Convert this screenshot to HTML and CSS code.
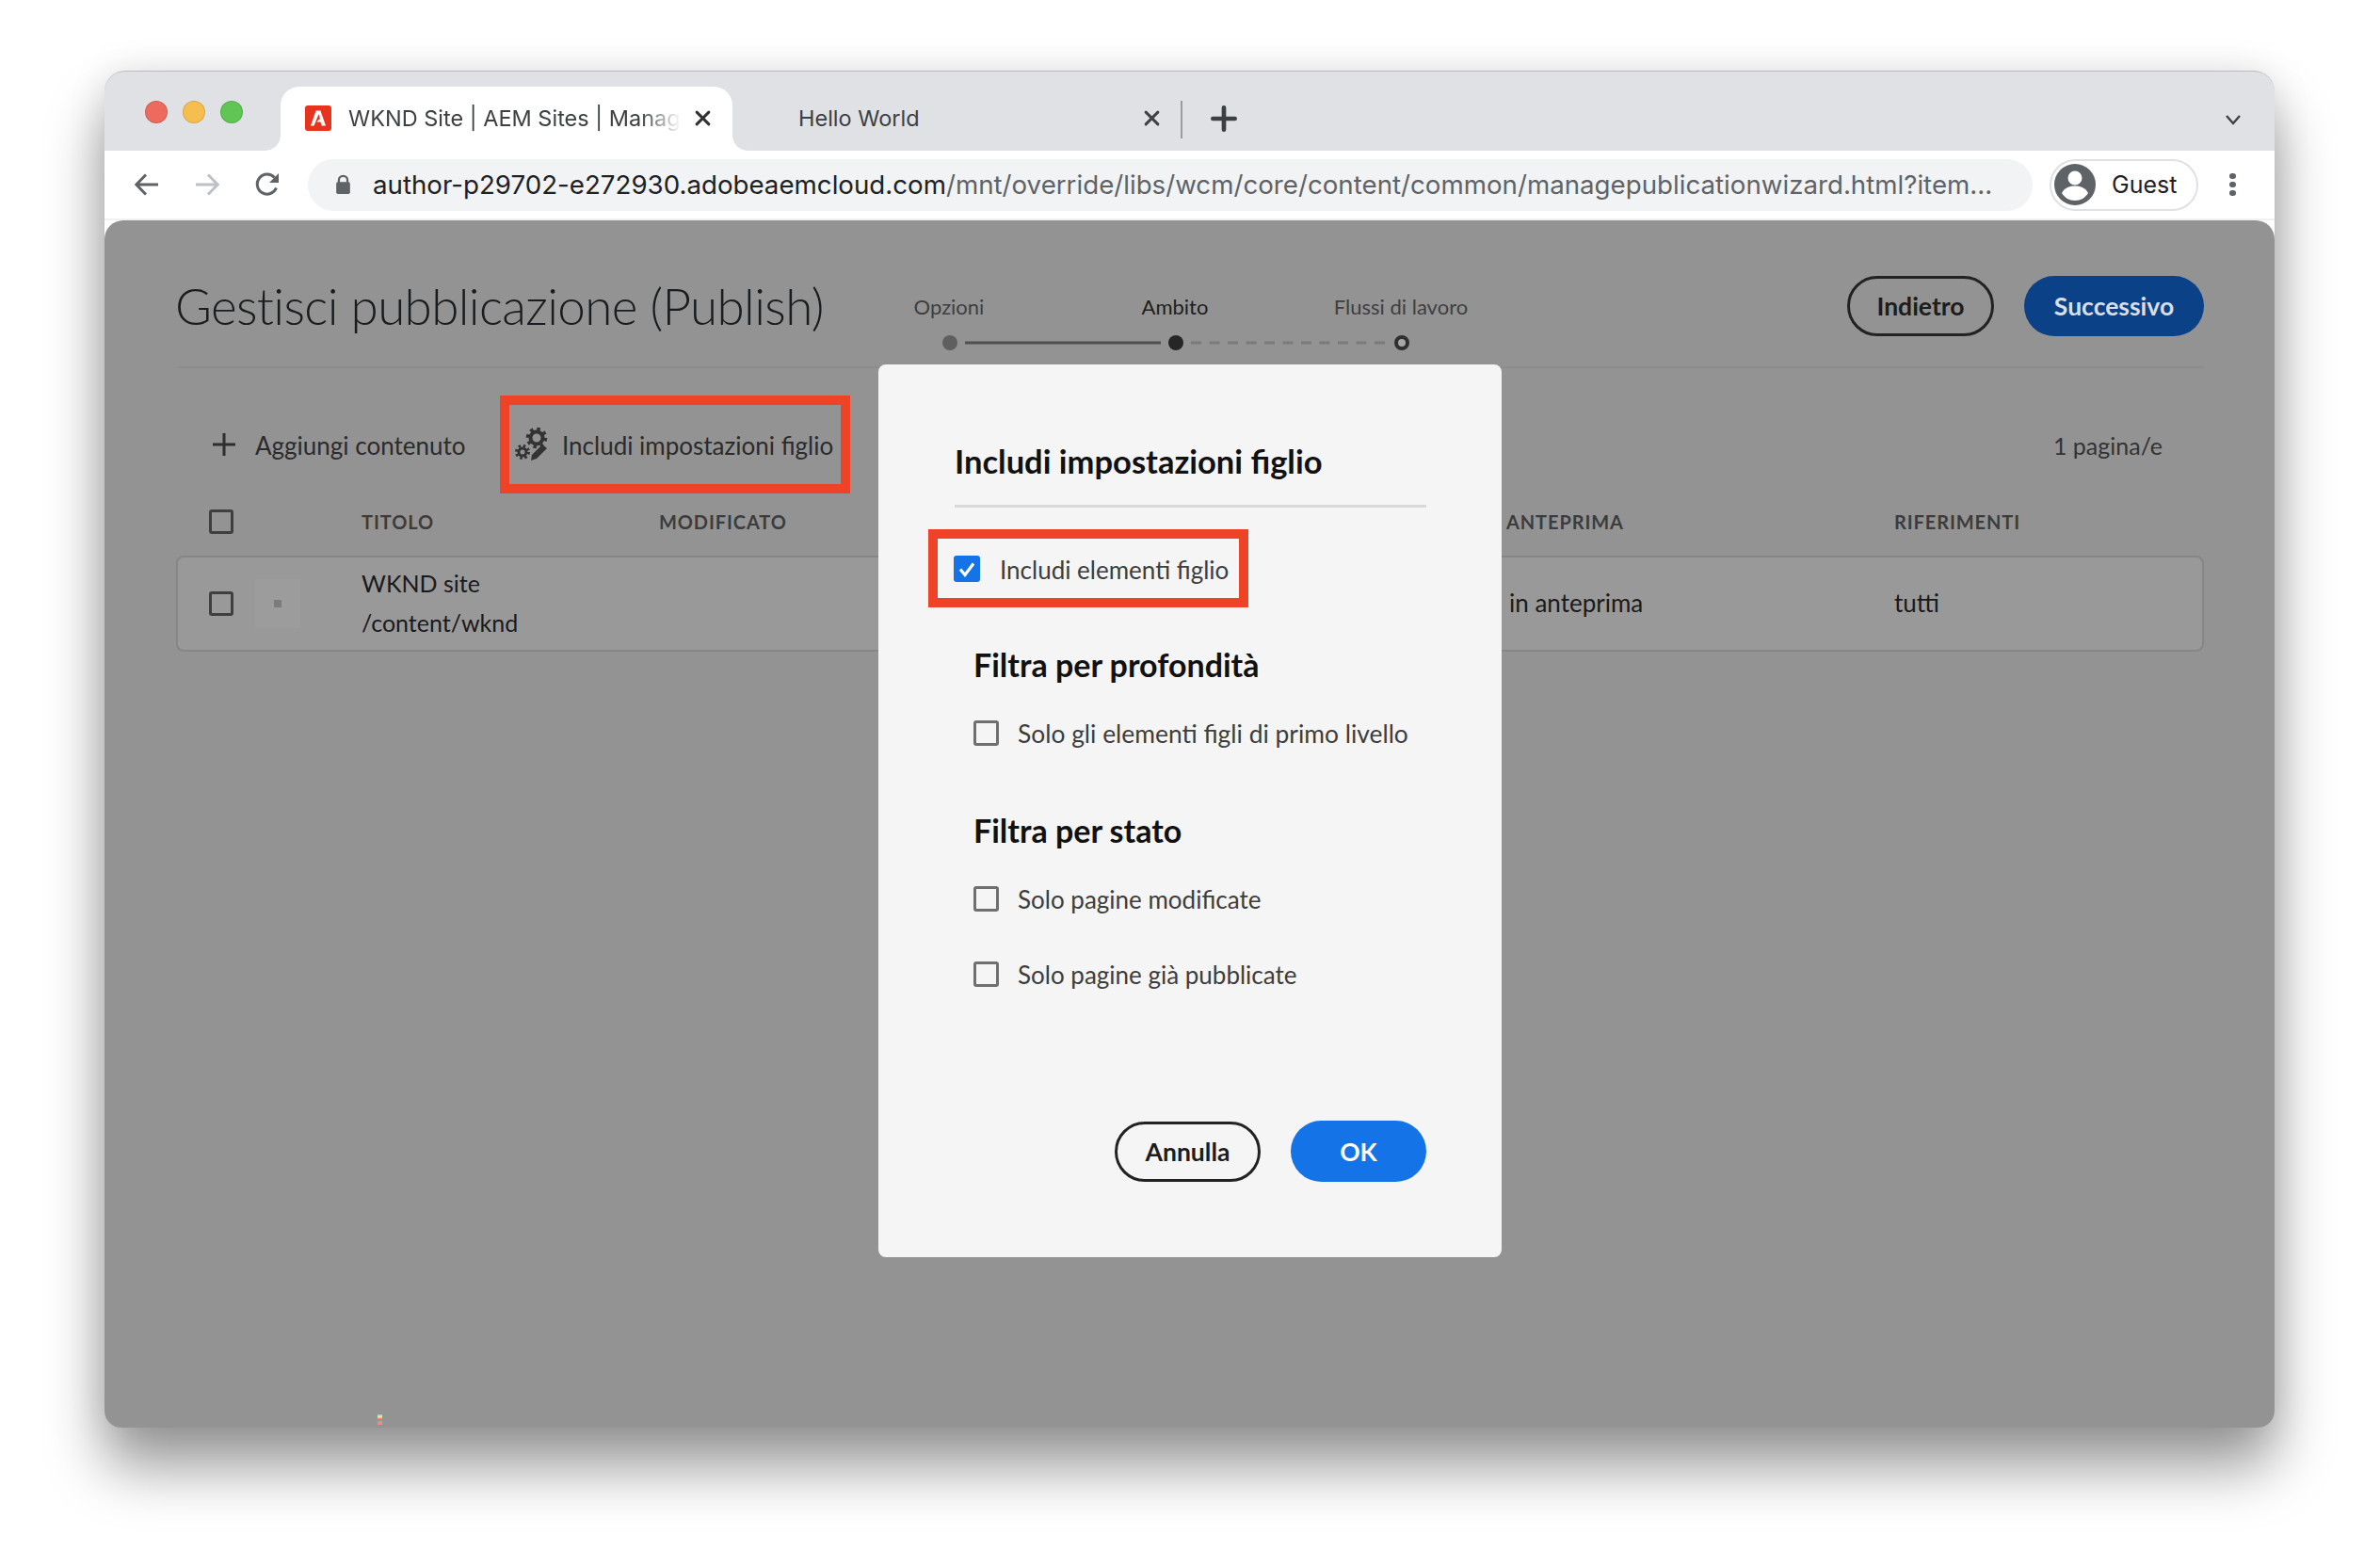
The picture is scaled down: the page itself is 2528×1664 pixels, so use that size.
FILE: index.html
```html
<!DOCTYPE html>
<html lang="it">
<head>
<meta charset="utf-8">
<title>Gestisci pubblicazione</title>
<link rel="stylesheet" href="styles.css">
</head>
<body>
<div class="window">
  <div class="tabstrip">
    <div class="lights"><span class="light red"></span><span class="light yellow"></span><span class="light green"></span></div>
    <div class="tab active">
      <svg class="favicon" viewBox="0 0 28 27"><rect width="28" height="27" rx="3" fill="#e8341f"/><path d="M11.600 5.500h4.800L22 21.500h-4.200l-1.400-4h-4.200l3-2.900 1-.1-1.800-5.200L9.600 21.500H6z" fill="#fff"/></svg>
      <span class="tab-title fade">WKND Site | AEM Sites | Manag</span>
      <svg class="tab-close" viewBox="0 0 16 16"><path d="M2 2l12 12M14 2L2 14" stroke="#2f3134" stroke-width="2.800" stroke-linecap="round"/></svg>
    </div>
    <div class="tab second">
      <span class="tab-title">Hello World</span>
      <svg class="tab-close" viewBox="0 0 16 16"><path d="M2 2l12 12M14 2L2 14" stroke="#3f4145" stroke-width="2.800" stroke-linecap="round"/></svg>
    </div>
    <span class="tab-sep"></span>
    <svg class="new-tab" viewBox="0 0 24 24"><path d="M12 2v20M2 12h20" stroke="#3c4043" stroke-width="4" stroke-linecap="round"/></svg>
    <svg class="tab-list" viewBox="0 0 18 12"><path d="M2 2l7 8 7-8" fill="none" stroke="#3c4043" stroke-width="2.400"/></svg>
  </div>
  <div class="toolbar">
    <svg class="nav" viewBox="0 0 28 28"><path d="M26 14H3M13 3.500L2.800 14 13 24.500" fill="none" stroke="#5f6368" stroke-width="3"/></svg>
    <svg class="nav" viewBox="0 0 28 28"><path d="M2 14h23M15 3.500L25.200 14 15 24.500" fill="none" stroke="#bdc1c6" stroke-width="3"/></svg>
    <svg class="nav" viewBox="0 0 28 28"><path d="M23.500 17.500A10.500 10.500 0 1 1 21.500 6.500" fill="none" stroke="#5f6368" stroke-width="3"/><path d="M26 2v10H16z" fill="#5f6368"/></svg>
    <div class="omnibox">
      <svg class="lock" viewBox="0 0 18 24"><path d="M4 10V7a5 5 0 0 1 10 0v3" fill="none" stroke="#5f6368" stroke-width="2.500"/><rect x="1" y="9" width="16" height="14" rx="2" fill="#5f6368"/></svg>
      <span class="url"><span class="host">author-p29702-e272930.adobeaemcloud.com</span>/mnt/override/libs/wcm/core/content/common/managepublicationwizard.html?item...</span>
    </div>
    <div class="profile">
      <svg class="avatar" viewBox="0 0 44 44"><circle cx="22" cy="22" r="22" fill="#5f6368"/><circle cx="22" cy="15" r="7.500" fill="#fff"/><path d="M8 31c3-6 9-7.500 14-7.500S33 25 36 31c-3 5-8 8-14 8S11 36 8 31z" fill="#fff"/></svg>
      <span class="guest">Guest</span>
    </div>
    <div class="kebab"><i></i><i></i><i></i></div>
  </div>
  <div class="content">
    <header class="page-head">
      <h1 class="page-title">Gestisci pubblicazione (Publish)</h1>
      <div class="steps">
        <div class="step-labels"><span>Opzioni</span><span class="current">Ambito</span><span>Flussi di lavoro</span></div>
        <svg class="step-track" viewBox="0 0 720 18" width="720" height="18">
          <path d="M137 9H345" stroke="#4f4f4f" stroke-width="3"/>
          <path d="M377 9H584" stroke="#7b7b7b" stroke-width="3" stroke-dasharray="11 8.500"/>
          <circle cx="121" cy="9" r="8" fill="#5f5f5f"/>
          <circle cx="361" cy="9" r="8" fill="#262626"/>
          <circle cx="601" cy="9" r="6" fill="#a8a8a8" stroke="#2f2f2f" stroke-width="4"/>
        </svg>
      </div>
      <div class="head-actions">
        <button class="btn quiet back">Indietro</button>
        <button class="btn primary next">Successivo</button>
      </div>
    </header>
    <div class="actions">
      <div class="add"><svg class="plus" viewBox="0 0 26 26"><path d="M13 1v24M1 13h24" stroke="#2f2f2f" stroke-width="3"/></svg><span class="action-text">Aggiungi contenuto</span></div>
      <div class="highlight include">
        <svg class="gear" viewBox="0 0 36 36">
          <circle cx="23" cy="11" r="6.500" fill="none" stroke="#333" stroke-width="4"/>
          <circle cx="23" cy="11" r="9.500" fill="none" stroke="#333" stroke-width="3.500" stroke-dasharray="3.500 3.960"/>
          <circle cx="8" cy="26" r="4" fill="none" stroke="#333" stroke-width="3"/>
          <circle cx="8" cy="26" r="6.500" fill="none" stroke="#333" stroke-width="3" stroke-dasharray="2.500 2.600"/>
          <path d="M18 29l11-11 5 4-11 11-6 2z" fill="#333"/>
        </svg>
        <span class="action-text">Includi impostazioni figlio</span>
      </div>
      <div class="count action-text">1 pagina/e</div>
    </div>
    <div class="table">
      <div class="thead">
        <span class="cb dim"></span><span></span>
        <span class="th">TITOLO</span><span class="th">MODIFICATO</span>
        <span class="th">ANTEPRIMA</span><span class="th">RIFERIMENTI</span>
      </div>
      <div class="trow">
        <span class="cb dim"></span>
        <span class="thumb"><i></i></span>
        <span class="title-cell"><span>WKND site</span><span>/content/wknd</span></span>
        <span></span>
        <span class="td preview">in anteprima</span>
        <span class="td">tutti</span>
      </div>
    </div>
    <div class="speck"><i class="s1"></i><i class="s2"></i></div>
  </div>
</div>

<section class="dialog">
  <h2 class="dialog-title">Includi impostazioni figlio</h2>
  <div class="highlight include-children">
    <span class="cb checked"><svg viewBox="0 0 28 28"><path d="M7 14.500l5 6 9-12" fill="none" stroke="#fff" stroke-width="3.200"/></svg></span>
    <span class="opt-label lowered">Includi elementi figlio</span>
  </div>
  <div class="filters">
    <h3 class="group-title depth">Filtra per profondità</h3>
    <label class="opt first"><span class="cb"></span><span class="opt-label wide">Solo gli elementi figli di primo livello</span></label>
    <h3 class="group-title state">Filtra per stato</h3>
    <label class="opt first"><span class="cb"></span><span class="opt-label">Solo pagine modificate</span></label>
    <label class="opt second-opt"><span class="cb"></span><span class="opt-label">Solo pagine già pubblicate</span></label>
  </div>
  <div class="dialog-actions">
    <button class="btn quiet cancel">Annulla</button>
    <button class="btn cta ok">OK</button>
  </div>
</section>
</body>
</html>
```
FILE: styles.css
```css
* { box-sizing: border-box; }
html, body { margin: 0; height: 1664px; overflow: hidden; }
body { background: #fff; padding: 75px 112px 0 111px; font-family: Lato, "Noto Sans", sans-serif; color: #222; position: relative; }

.window { height: 1441px; display: flex; flex-direction: column; border-radius: 22px 22px 20px 20px; background: #fff; box-shadow: 0 42px 62px rgba(0,0,0,.4), 0 0 40px rgba(0,0,0,.1); }

.tabstrip { height: 85px; flex: none; background: #dfe1e5; border-radius: 22px 22px 0 0; border-top: 1px solid #b9bbbe; display: flex; align-items: flex-end; padding-left: 43px; font-family: Inter, Roboto, sans-serif; }
.lights { display: flex; gap: 16px; align-self: flex-start; margin-top: 31px; width: 144px; }
.light { width: 24px; height: 24px; border-radius: 50%; border: 1px solid rgba(0,0,0,.12); }
.red { background: #ed6a5e; } .yellow { background: #f5bf4f; } .green { background: #61c554; }

.tab { height: 68px; width: 480px; display: flex; align-items: center; position: relative; flex: none; font-size: 23.5px; color: #3c4043; }
.tab.active { background: #fff; border-radius: 20px 20px 0 0; padding: 0 23px 2px 26px; }
.tab.active::before, .tab.active::after { content: ""; position: absolute; bottom: 0; width: 16px; height: 16px; }
.tab.active::before { left: -16px; background: radial-gradient(circle at 0 0, transparent 15.500px, #fff 16px); }
.tab.active::after { right: -16px; background: radial-gradient(circle at 100% 0, transparent 15.500px, #fff 16px); }
.favicon { width: 28px; height: 27px; flex: none; margin-right: 18px; }
.tab-title { white-space: nowrap; margin-right: auto; }
.fade { -webkit-mask-image: linear-gradient(90deg, #000 88%, transparent 100%); mask-image: linear-gradient(90deg, #000 88%, transparent 100%); }
.tab-close { width: 17px; height: 17px; flex: none; }
.tab.second { width: 476px; padding: 0 22px 2px 70px; }
.tab-sep { width: 2px; height: 40px; background: #9a9ca1; flex: none; margin: 0 0 13px 0; }
.new-tab { width: 28px; height: 28px; flex: none; margin: 0 0 20px 30px; }
.tab-list { width: 18px; height: 12px; flex: none; margin: 0 35px 27px auto; }

.toolbar { height: 74px; flex: none; background: #fff; display: flex; align-items: center; padding-left: 31px; border-bottom: 2px solid #f1f1f1; }
.nav { width: 28px; height: 28px; flex: none; margin-right: 36px; }
.nav:nth-child(3) { margin-right: 29px; }
.omnibox { width: 1832px; height: 55px; flex: none; border-radius: 28px; background: #f1f3f4; display: flex; align-items: center; padding-left: 29px; }
.lock { width: 17px; height: 22px; flex: none; margin-right: 23px; }
.url { font-family: Inter, Roboto, sans-serif; font-size: 27.7px; color: #5f6368; white-space: nowrap; }
.host { color: #202124; }
.profile { width: 158px; height: 55px; flex: none; margin-left: 18px; border: 2px solid #dfe1e5; border-radius: 28px; display: flex; align-items: center; padding-left: 3px; }
.avatar { width: 44px; height: 44px; flex: none; }
.guest { font-family: Inter, Roboto, sans-serif; font-size: 25px; color: #202124; margin-left: 17px; }
.kebab { flex: none; margin-left: 33px; display: flex; flex-direction: column; gap: 2.5px; }
.kebab i { width: 6.500px; height: 6.500px; border-radius: 50%; background: #5f6368; }

.content { flex: 1; position: relative; background: #939393; border-radius: 20px 20px 18px 18px; padding: 0 75px 0 78px; }

.page-head { height: 157px; padding-top: 58px; border-bottom: 2px solid #8c8c8c; display: flex; align-items: flex-start; }
.page-title { margin: 0 0 0 -3px; width: 702px; flex: none; height: 65px; line-height: 65px; font-weight: 300; font-size: 53px; letter-spacing: -.65px; color: #1a1d20; white-space: nowrap; }
.steps { width: 720px; flex: none; margin-top: 22px; }
.step-labels { display: grid; grid-template-columns: repeat(3, 240px); text-align: center; font-size: 22px; line-height: 24px; color: #3f3f3f; }
.step-labels .current { color: #1e1e1e; }
.step-track { display: block; margin-top: 17px; }
.head-actions { margin-left: auto; display: flex; gap: 32px; margin-top: 1px; }
.btn { height: 64px; border-radius: 32px; font-family: Lato, "Noto Sans", sans-serif; font-weight: 700; font-size: 26.5px; padding: 0; }
.quiet { background: transparent; border: 3.500px solid #222; color: #1d1d1d; }
.primary { background: #0a4187; border: 0; color: #d9dfe8; }
.cta { background: #1473e6; border: 0; color: #fff; }
.back { width: 156px; } .next { width: 191px; }

.actions { height: 133px; display: flex; align-items: center; padding: 29px 0 0 36px; font-size: 26px; color: #2b2b2b; }
.action-text { padding-top: 2px; }
.add { display: flex; align-items: center; gap: 20px; width: 306px; flex: none; white-space: nowrap; }
.plus { width: 26px; height: 26px; flex: none; }
.highlight { border: 10px solid #ee4327; display: flex; align-items: center; flex: none; }
.include { width: 372px; height: 104px; padding-left: 6px; gap: 14px; white-space: nowrap; }
.gear { width: 36px; height: 36px; flex: none; }
.count { margin-left: auto; margin-right: 44px; color: #333; font-size: 25px; }

.th { font-size: 20px; font-weight: 700; letter-spacing: .9px; color: #3c3c3c; }
.thead, .trow { display: grid; align-items: center; }
.thead { height: 66px; padding: 0 0 6px 33px; grid-template-columns: 26px 136px 316px 900px 412px 1fr; }
.trow { height: 102px; margin-left: -2px; border: 2px solid #868686; border-radius: 8px; background: #999; padding: 0 0 3px 33px; grid-template-columns: 26px 136px 316px 903px 409px 1fr; }
.trow .cb, .trow .thumb { margin-top: 3px; }
.cb { display: block; width: 27px; height: 27px; border: 3px solid #6f6f6f; border-radius: 3px; flex: none; background: transparent; }
.cb.dim { width: 26px; height: 26px; border-color: #3f3f3f; }
.cb.checked { width: 28px; height: 28px; background: #1473e6; border: 0; }
.cb.checked svg { display: block; }
.thumb { width: 48px; height: 52px; margin-left: 23px; justify-self: start; background: #9c9c9c; display: flex; align-items: center; justify-content: center; }
.thumb i { width: 8px; height: 8px; background: #7c7c7c; }
.title-cell { display: flex; flex-direction: column; gap: 14px; font-size: 25px; line-height: 28px; color: #1a1a1a; }
.td { font-size: 26px; color: #1a1a1a; }

.speck i { position: absolute; left: 290px; width: 5px; display: block; }
.speck .s1 { top: 1268px; height: 5px; background: linear-gradient(#8cc, #ee8 50%, #e77); }
.speck .s2 { top: 1275px; height: 4px; background: #f08a80; }

.dialog { position: absolute; left: 933px; top: 387px; width: 662px; height: 948px; background: #f5f5f5; border-radius: 8px; padding: 78px 80px 0 81px; }
.dialog-title { margin: 0; height: 74px; font-size: 34.5px; line-height: 50px; font-weight: 700; color: #111; border-bottom: 3px solid #d9d9d9; }
.include-children { width: 340px; height: 83px; margin: 23px 0 0 -28px; padding-left: 17px; gap: 21px; }
.opt-label { font-size: 26px; color: #3d3d3d; white-space: nowrap; }
.opt-label.wide { font-size: 26.4px; }
.lowered { padding-top: 2px; }
.filters { padding-left: 20px; }
.group-title { margin: 0; font-size: 34px; line-height: 44px; font-weight: 700; color: #111; }
.group-title.depth { margin-top: 39px; }
.group-title.state { margin-top: 68px; }
.opt { display: flex; align-items: center; gap: 20px; height: 27px; }
.opt.first { margin-top: 37px; }
.opt.second-opt { margin-top: 53px; }
.dialog-actions { position: absolute; right: 80px; bottom: 80px; display: flex; gap: 32px; align-items: center; }
.cancel { width: 155px; }
.ok { width: 144px; height: 65px; border-radius: 33px; }
```
